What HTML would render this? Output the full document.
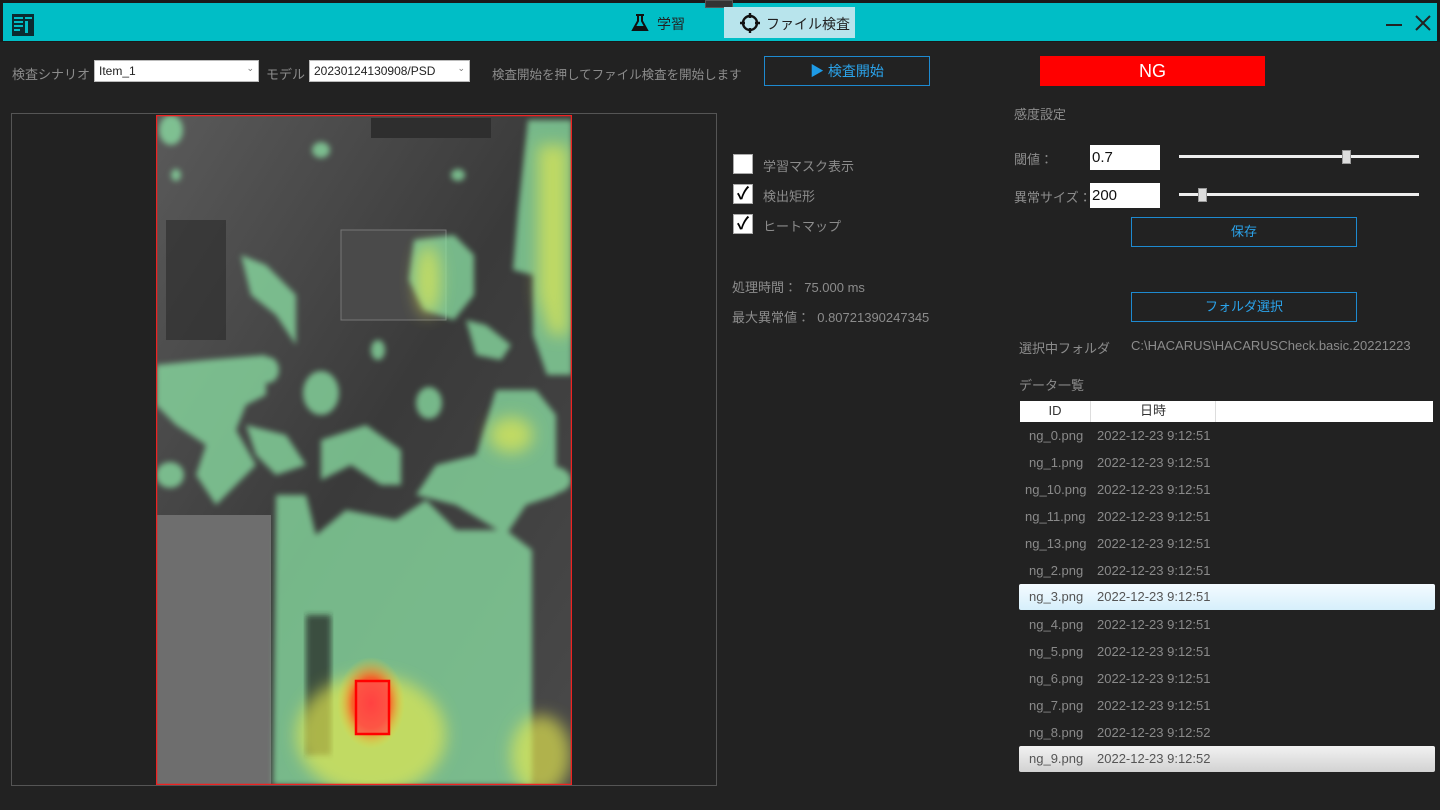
<!DOCTYPE html>
<html><head><meta charset="utf-8">
<style>
*{margin:0;padding:0;box-sizing:border-box}
body{width:1440px;height:810px;background:#222;font-family:"Liberation Sans","Noto Sans CJK JP",sans-serif;color:#8c8c8c;position:relative;overflow:hidden;font-size:13px}
.a{position:absolute;white-space:nowrap}
.top{position:absolute;left:0;top:0;width:1440px;height:42px;background:#1a1a1a}
.bar{position:absolute;left:3px;top:3px;width:1434px;height:38px;background:#00bec6}
.sel{background:#fff;color:#222;border:1px solid #bbb;height:22px;font-size:12px;padding:3px 4px}
.btn{border:1px solid #1e8ad0;color:#2ba3ea;text-align:center;font-size:13px}
.cb{width:20px;height:20px;background:#fff;border:1px solid #aaa;color:#000;font-size:17px;line-height:18px;text-align:center;font-weight:bold}
.inp{background:#fff;color:#111;font-size:15px;padding:4px 2px;width:70px;height:25px}
.row{position:absolute;left:1019px;width:416px;height:26px;font-size:13px;color:#8a8a8a}
.row span{position:absolute;top:5px}
</style></head><body>
<div class="top"></div>
<div class="bar"></div>
<div class="a" style="left:705px;top:0;width:28px;height:8px;background:#333;border:1px solid #555"></div>
<svg class="a" style="left:12px;top:14px" width="22" height="22" viewBox="0 0 22 22"><rect x="0" y="0" width="22" height="22" fill="#0b2b30"/><g fill="#00bec6"><rect x="2" y="3" width="9" height="2"/><rect x="2" y="7" width="9" height="2"/><rect x="2" y="11" width="9" height="2"/><rect x="2" y="15" width="6" height="2"/><rect x="13" y="3" width="7" height="2"/><rect x="13" y="7" width="3" height="12"/></g></svg>
<svg class="a" style="left:630px;top:13px" width="20" height="20" viewBox="0 0 20 20"><path d="M6 2h8M8 2v6L3 17h14L12 8V2" fill="none" stroke="#111" stroke-width="2"/><path d="M5 13h10l2 4H3z" fill="#111"/></svg>
<div class="a" style="left:657px;top:14px;font-size:14px;color:#222">学習</div>
<div class="a" style="left:724px;top:7px;width:131px;height:31px;background:#b8e4ec"></div>
<svg class="a" style="left:739px;top:12px" width="22" height="22" viewBox="0 0 22 22"><circle cx="11" cy="11" r="7" fill="none" stroke="#111" stroke-width="2.4"/><path d="M11 1v5M11 16v5M1 11h5M16 11h5" stroke="#111" stroke-width="2.4"/></svg>
<div class="a" style="left:766px;top:14px;font-size:14px;color:#222">ファイル検査</div>
<div class="a" style="left:1386px;top:24px;width:16px;height:2px;background:#222"></div>
<svg class="a" style="left:1414px;top:14px" width="18" height="18"><path d="M2 2L16 16M16 2L2 16" stroke="#222" stroke-width="2"/></svg>

<div class="a" style="left:12px;top:64px">検査シナリオ</div>
<div class="a sel" style="left:94px;top:60px;width:165px">Item_1<span style="position:absolute;right:4px;top:2px;font-size:9px;color:#777">⌄</span></div>
<div class="a" style="left:266px;top:64px">モデル</div>
<div class="a sel" style="left:309px;top:60px;width:161px">20230124130908/PSD<span style="position:absolute;right:4px;top:2px;font-size:9px;color:#777">⌄</span></div>
<div class="a" style="left:492px;top:64px;font-size:12.5px">検査開始を押してファイル検査を開始します</div>
<div class="a btn" style="left:764px;top:56px;width:166px;height:30px;line-height:28px;font-size:14px"><span style="color:#1e9be6">▶</span> 検査開始</div>
<div class="a" style="left:1040px;top:56px;width:225px;height:30px;background:#f00;color:#fff;font-size:18px;text-align:center;line-height:31px">NG</div>

<div class="a" style="left:11px;top:113px;width:706px;height:673px;border:1px solid #555"></div>
<svg class="a" style="left:156px;top:115px" width="416" height="670" viewBox="0 0 416 670">
<defs>
<linearGradient id="bg" x1="0" y1="0" x2="1" y2="1"><stop offset="0" stop-color="#5a5a5a"/><stop offset=".5" stop-color="#3a3a3a"/><stop offset="1" stop-color="#4a4a4a"/></linearGradient>
<filter id="bl"><feGaussianBlur stdDeviation="3"/></filter>
<filter id="bl2"><feGaussianBlur stdDeviation="8"/></filter>
<radialGradient id="rd"><stop offset="0" stop-color="#ff2020"/><stop offset=".55" stop-color="#ff5020" stop-opacity=".85"/><stop offset="1" stop-color="#f0d830" stop-opacity="0"/></radialGradient>
</defs>
<rect width="416" height="670" fill="url(#bg)"/>
<rect x="0" y="400" width="115" height="270" fill="#6e6e6e"/>
<rect x="185" y="115" width="105" height="90" fill="#4a4a4a" stroke="#777"/>
<rect x="215" y="3" width="120" height="20" fill="#2e2e2e"/>
<rect x="10" y="105" width="60" height="120" fill="#2a2a2a" opacity=".6"/>
<g fill="#8ee8a8" opacity=".72" filter="url(#bl)">
<path d="M372 5h44v255h-25l-14-40v-60l-20-5 5-60z"/>
<path d="M258 125l40-5 20 20 0 40-20 25-30-10-15-30z"/>
<path d="M310 205l20 5 25 20-10 15-25-5z"/>
<path d="M85 140l25 10 30 30 0 50-20-30-25-20z"/>
<path d="M0 250l50-5 60-5 0 40-20 10-10 25 20 35-40 40-20-30 10-30-30-20-20-20z"/>
<path d="M90 310l40 10 20 30-30 10-20-20z"/>
<path d="M165 325l45-15 35 25 0 35-20 0-30-20-30 15z"/>
<path d="M340 275l40 0 20 25 0 80-30 10-20 30-50-30-40-10 20-30 40-10z"/>
<path d="M120 380l30 0 10 40 30-25 50 10 30-20 30 30 50 0 26 20v235H117z"/>
<ellipse cx="15" cy="15" rx="12" ry="15"/><ellipse cx="165" cy="35" rx="9" ry="8"/><ellipse cx="302" cy="60" rx="7" ry="6"/><ellipse cx="20" cy="60" rx="5" ry="6"/>
<ellipse cx="165" cy="278" rx="18" ry="22"/><ellipse cx="273" cy="288" rx="13" ry="16"/><ellipse cx="112" cy="255" rx="11" ry="13"/><ellipse cx="222" cy="235" rx="7" ry="10"/><ellipse cx="14" cy="360" rx="14" ry="13"/><ellipse cx="395" cy="365" rx="20" ry="14"/>
</g>
<rect x="150" y="500" width="25" height="140" fill="#222" opacity=".7" filter="url(#bl)"/>
<g fill="#e8ec50" opacity=".65" filter="url(#bl2)">
<path d="M382 30h30v190h-18l-12-40z"/>
<ellipse cx="272" cy="165" rx="12" ry="35"/>
<ellipse cx="215" cy="620" rx="75" ry="60"/>
<ellipse cx="385" cy="640" rx="30" ry="40"/>
<ellipse cx="355" cy="320" rx="22" ry="18"/>
</g>
<ellipse cx="215" cy="588" rx="34" ry="46" fill="url(#rd)"/>
<rect x="200" y="566" width="33" height="53" fill="#ff5050" opacity=".7"/>
<rect x="200" y="566" width="33" height="53" fill="none" stroke="#f00" stroke-width="2.5"/>
<rect x="0.5" y="0.5" width="415" height="669" fill="none" stroke="#e22" stroke-width="1.5"/>
</svg>

<div class="a cb" style="left:733px;top:154px"></div><div class="a" style="left:763px;top:156px">学習マスク表示</div>
<div class="a cb" style="left:733px;top:184px">✓</div><div class="a" style="left:763px;top:186px">検出矩形</div>
<div class="a cb" style="left:733px;top:214px">✓</div><div class="a" style="left:763px;top:216px">ヒートマップ</div>
<div class="a" style="left:732px;top:277px">処理時間：&nbsp; 75.000 ms</div>
<div class="a" style="left:732px;top:307px">最大異常値：&nbsp; 0.80721390247345</div>

<div class="a" style="left:1014px;top:104px">感度設定</div>
<div class="a" style="left:1014px;top:149px">閾値：</div>
<div class="a inp" style="left:1090px;top:145px">0.7</div>
<div class="a" style="left:1179px;top:155px;width:240px;height:3px;background:#eee"></div>
<div class="a" style="left:1342px;top:150px;width:9px;height:14px;background:#ddd;border:1px solid #999"></div>
<div class="a" style="left:1014px;top:187px">異常サイズ：</div>
<div class="a inp" style="left:1090px;top:183px">200</div>
<div class="a" style="left:1179px;top:193px;width:240px;height:3px;background:#eee"></div>
<div class="a" style="left:1198px;top:188px;width:9px;height:14px;background:#ddd;border:1px solid #999"></div>
<div class="a btn" style="left:1131px;top:217px;width:226px;height:30px;line-height:28px">保存</div>
<div class="a btn" style="left:1131px;top:292px;width:226px;height:30px;line-height:28px">フォルダ選択</div>
<div class="a" style="left:1019px;top:338px">選択中フォルダ</div>
<div class="a" style="left:1131px;top:338px">C:\HACARUS\HACARUSCheck.basic.20221223</div>
<div class="a" style="left:1019px;top:375px">データ一覧</div>
<div class="a" style="left:1020px;top:401px;width:413px;height:21px;background:#fff;color:#333;font-size:13px">
<span class="a" style="left:0;top:0;width:71px;height:21px;border-right:1px solid #ddd;text-align:center;line-height:20px">ID</span>
<span class="a" style="left:71px;top:0;width:125px;height:21px;border-right:1px solid #ddd;text-align:center;line-height:20px">日時</span></div>

<div class="row" style="top:423px"><span style="left:10px">ng_0.png</span><span style="left:78px">2022-12-23 9:12:51</span></div>
<div class="row" style="top:450px"><span style="left:10px">ng_1.png</span><span style="left:78px">2022-12-23 9:12:51</span></div>
<div class="row" style="top:477px"><span style="left:6px">ng_10.png</span><span style="left:78px">2022-12-23 9:12:51</span></div>
<div class="row" style="top:504px"><span style="left:6px">ng_11.png</span><span style="left:78px">2022-12-23 9:12:51</span></div>
<div class="row" style="top:531px"><span style="left:6px">ng_13.png</span><span style="left:78px">2022-12-23 9:12:51</span></div>
<div class="row" style="top:558px"><span style="left:10px">ng_2.png</span><span style="left:78px">2022-12-23 9:12:51</span></div>
<div class="row" style="top:584px;background:linear-gradient(#f4fbff,#d6effb);border-radius:2px;color:#555"><span style="left:10px">ng_3.png</span><span style="left:78px">2022-12-23 9:12:51</span></div>
<div class="row" style="top:612px"><span style="left:10px">ng_4.png</span><span style="left:78px">2022-12-23 9:12:51</span></div>
<div class="row" style="top:639px"><span style="left:10px">ng_5.png</span><span style="left:78px">2022-12-23 9:12:51</span></div>
<div class="row" style="top:666px"><span style="left:10px">ng_6.png</span><span style="left:78px">2022-12-23 9:12:51</span></div>
<div class="row" style="top:693px"><span style="left:10px">ng_7.png</span><span style="left:78px">2022-12-23 9:12:51</span></div>
<div class="row" style="top:720px"><span style="left:10px">ng_8.png</span><span style="left:78px">2022-12-23 9:12:52</span></div>
<div class="row" style="top:746px;background:linear-gradient(#f2f2f2,#d2d2d2);border-radius:2px;color:#555"><span style="left:10px">ng_9.png</span><span style="left:78px">2022-12-23 9:12:52</span></div>
</body></html>
